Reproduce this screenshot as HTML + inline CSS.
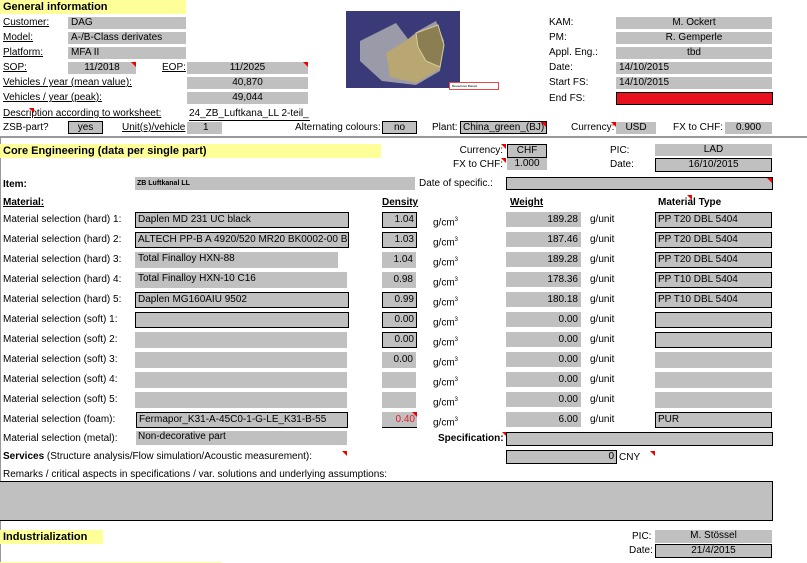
<!DOCTYPE html>
<html><head><meta charset="utf-8"><style>
body{margin:0;width:807px;height:563px;background:#fff;position:relative;overflow:hidden;font-family:"Liberation Sans",Arial,sans-serif;font-size:10px;color:#000}
div{position:absolute;box-sizing:border-box;white-space:nowrap}
.g{background:#c0c0c0;line-height:12px;padding:0 3px}
.b{border:1px solid #000}
.c{text-align:center}.r{text-align:right}
.y{background:#ffff99;font-weight:bold;font-size:11px;line-height:14px;padding-left:3px}
.u{text-decoration:underline}
.t{line-height:12px}
.tri{width:0;height:0;border-top:5px solid #e00;border-left:5px solid transparent}
sup{font-size:6px}
</style></head><body>
<!-- General -->
<div class="y" style="left:0;top:0;width:186px;height:14px">General information</div>
<div class="t u" style="left:3px;top:17px">Customer:</div><div class="g" style="left:68px;top:17px;width:118px;height:12px">DAG</div>
<div class="t u" style="left:3px;top:32px">Model:</div><div class="g" style="left:68px;top:32px;width:118px;height:12px">A-/B-Class derivates</div>
<div class="t u" style="left:3px;top:47px">Platform:</div><div class="g" style="left:68px;top:47px;width:118px;height:12px">MFA II</div>
<div class="t u" style="left:3px;top:62px">SOP:</div><div class="g c" style="left:68px;top:62px;width:68px;height:12px">11/2018</div><div class="tri" style="left:131px;top:62px"></div>
<div class="t u" style="left:162px;top:62px">EOP:</div><div class="g c" style="left:187px;top:62px;width:121px;height:12px">11/2025</div><div class="tri" style="left:303px;top:62px"></div>
<div class="t u" style="left:3px;top:77px">Vehicles / year (mean value):</div><div class="g c" style="left:187px;top:77px;width:121px;height:12px">40,870</div>
<div class="t u" style="left:3px;top:92px">Vehicles / year (peak):</div><div class="g c" style="left:187px;top:92px;width:121px;height:12px">49,044</div>
<div class="t u" style="left:3px;top:108px">Description according to worksheet:</div><div class="tri" style="left:29px;top:108px"></div>
<div class="t" style="left:189px;top:108px;width:121px;overflow:hidden;border-bottom:1px solid #000">24_ZB_Luftkana_LL 2-teil_</div>
<div class="t" style="left:3px;top:122px">ZSB-part?</div><div class="g b c" style="left:68px;top:121px;width:35px;height:13px">yes</div>
<div class="t u" style="left:122px;top:122px">Unit(s)/vehicle</div><div class="g" style="left:187px;top:122px;width:35px;height:12px;padding-left:16px">1</div>
<div class="t" style="left:295px;top:122px">Alternating colours:</div><div class="g b c" style="left:382px;top:121px;width:35px;height:13px">no</div>
<div class="t" style="left:432px;top:122px">Plant:</div><div class="g b" style="left:460px;top:121px;width:87px;height:13px;padding-left:2px">China_green_(BJ)</div><div class="tri" style="left:541px;top:122px"></div>
<div class="t" style="left:571px;top:122px">Currency:</div><div class="tri" style="left:611px;top:122px"></div><div class="g c" style="left:616px;top:122px;width:40px;height:12px">USD</div>
<div class="t" style="left:673px;top:122px">FX to CHF:</div><div class="g c" style="left:725px;top:122px;width:47px;height:12px">0.900</div>
<!-- image -->
<div style="left:346px;top:11px;width:114px;height:77px;background:#3b3a78;overflow:hidden">
<svg width="114" height="77"><polygon points="14,30 50,12 62,28 72,20 90,10 98,30 94,60 70,74 36,70 14,50" fill="#9a9aa8"/><polygon points="40,42 72,22 92,14 98,34 94,58 70,72 44,66" fill="#b8a772"/><polygon points="70,22 92,14 98,34 94,56 80,50 72,36" fill="#8a7e52" stroke="#d8cc99"/></svg></div>
<div style="left:449px;top:82px;width:50px;height:8px;border:1px solid #e44;background:#fff;font-size:3px;line-height:6px;padding-left:2px">Bewerfetes Bauteil</div>
<div class="t" style="left:549px;top:17px">KAM:</div><div class="g c" style="left:616px;top:17px;width:156px;height:12px">M. Ockert</div>
<div class="t" style="left:549px;top:32px">PM:</div><div class="g c" style="left:616px;top:32px;width:156px;height:12px">R. Gemperle</div>
<div class="t" style="left:549px;top:47px">Appl. Eng.:</div><div class="g c" style="left:616px;top:47px;width:156px;height:12px">tbd</div>
<div class="t" style="left:549px;top:62px">Date:</div><div class="g" style="left:616px;top:62px;width:156px;height:12px">14/10/2015</div>
<div class="t" style="left:549px;top:77px">Start FS:</div><div class="g" style="left:616px;top:77px;width:156px;height:12px">14/10/2015</div>
<div class="t" style="left:549px;top:93px">End FS:</div><div class="b" style="left:616px;top:92px;width:157px;height:13px;background:#e8101c"></div>
<div style="left:0;top:136px;width:807px;height:2px;background:#999"></div>
<div style="left:0;top:138px;width:1px;height:425px;background:#999"></div>
<!-- Core -->
<div class="y" style="left:0;top:144px;width:381px;height:14px">Core Engineering (data per single part)</div>
<div class="t r" style="left:430px;top:145px;width:73px">Currency:</div><div class="tri" style="left:501px;top:144px"></div><div class="g b c" style="left:507px;top:144px;width:40px;height:14px">CHF</div>
<div class="t r" style="left:430px;top:159px;width:73px">FX to CHF:</div><div class="tri" style="left:501px;top:158px"></div><div class="g c" style="left:507px;top:158px;width:40px;height:12px">1.000</div>
<div class="t" style="left:610px;top:145px">PIC:</div><div class="g c" style="left:655px;top:144px;width:117px;height:12px">LAD</div>
<div class="t" style="left:610px;top:159px">Date:</div><div class="g b c" style="left:655px;top:158px;width:117px;height:14px">16/10/2015</div>
<div class="t" style="left:3px;top:179px;font-weight:bold">Item:</div>
<div class="g" style="left:135px;top:177px;width:280px;height:13px;font-size:7px;font-weight:bold;line-height:13px;padding-left:2px">ZB Luftkanal LL</div>
<div class="t" style="left:419px;top:178px">Date of specific.:</div><div class="g b" style="left:506px;top:177px;width:267px;height:13px"></div><div class="tri" style="left:767px;top:178px"></div>
<div class="t u" style="left:3px;top:197px;font-weight:bold">Material:</div>
<div class="t u" style="left:382px;top:197px;font-weight:bold">Density</div>
<div class="t u" style="left:510px;top:197px;font-weight:bold">Weight</div>
<div class="t" style="left:658px;top:197px;font-weight:bold">Material Type</div><div class="tri" style="left:687px;top:195px"></div>

<div class="t" style="left:3px;top:214px">Material selection (hard) 1:</div><div class="g b" style="left:135px;top:212px;width:214px;height:16px;line-height:14px;padding-left:2px">Daplen MD 231 UC black</div><div class="g b r" style="left:382px;top:212px;width:35px;height:16px;line-height:14px;padding-right:2px">1.04</div><div class="t" style="left:433px;top:214px">g/cm<sup>3</sup></div><div class="g r" style="left:506px;top:212px;width:75px;height:15px;line-height:15px">189.28</div><div class="t" style="left:590px;top:214px">g/unit</div><div class="g b" style="left:655px;top:212px;width:117px;height:16px;line-height:14px;padding-left:2px">PP T20 DBL 5404</div>

<div class="t" style="left:3px;top:234px">Material selection (hard) 2:</div><div class="g b" style="left:135px;top:232px;width:214px;height:16px;line-height:14px;padding-left:2px;overflow:hidden">ALTECH PP-B A 4920/520 MR20 BK0002-00 BK</div><div class="g b r" style="left:382px;top:232px;width:35px;height:16px;line-height:14px;padding-right:2px">1.03</div><div class="t" style="left:433px;top:234px">g/cm<sup>3</sup></div><div class="g r" style="left:506px;top:232px;width:75px;height:15px;line-height:15px">187.46</div><div class="t" style="left:590px;top:234px">g/unit</div><div class="g b" style="left:655px;top:232px;width:117px;height:16px;line-height:14px;padding-left:2px">PP T20 DBL 5404</div>

<div class="t" style="left:3px;top:254px">Material selection (hard) 3:</div><div class="g" style="left:135px;top:252px;width:203px;height:16px;line-height:14px;padding-left:3px">Total Finalloy HXN-88</div><div class="g r" style="left:382px;top:252px;width:34px;height:16px;line-height:16px;padding-right:3px">1.04</div><div class="t" style="left:433px;top:254px">g/cm<sup>3</sup></div><div class="g r" style="left:506px;top:252px;width:75px;height:15px;line-height:15px">189.28</div><div class="t" style="left:590px;top:254px">g/unit</div><div class="g b" style="left:655px;top:252px;width:117px;height:16px;line-height:14px;padding-left:2px">PP T20 DBL 5404</div>

<div class="t" style="left:3px;top:274px">Material selection (hard) 4:</div><div class="g" style="left:135px;top:272px;width:212px;height:16px;line-height:14px;padding-left:3px">Total Finalloy HXN-10 C16</div><div class="g r" style="left:382px;top:272px;width:34px;height:16px;line-height:16px;padding-right:3px">0.98</div><div class="t" style="left:433px;top:274px">g/cm<sup>3</sup></div><div class="g r" style="left:506px;top:272px;width:75px;height:15px;line-height:15px">178.36</div><div class="t" style="left:590px;top:274px">g/unit</div><div class="g b" style="left:655px;top:272px;width:117px;height:16px;line-height:14px;padding-left:2px">PP T10 DBL 5404</div>

<div class="t" style="left:3px;top:294px">Material selection (hard) 5:</div><div class="g b" style="left:135px;top:292px;width:214px;height:16px;line-height:14px;padding-left:2px">Daplen MG160AIU 9502</div><div class="g b r" style="left:382px;top:292px;width:35px;height:16px;line-height:14px;padding-right:2px">0.99</div><div class="t" style="left:433px;top:294px">g/cm<sup>3</sup></div><div class="g r" style="left:506px;top:292px;width:75px;height:15px;line-height:15px">180.18</div><div class="t" style="left:590px;top:294px">g/unit</div><div class="g b" style="left:655px;top:292px;width:117px;height:16px;line-height:14px;padding-left:2px">PP T10 DBL 5404</div>

<div class="t" style="left:3px;top:314px">Material selection (soft) 1:</div><div class="g b" style="left:135px;top:312px;width:214px;height:16px"></div><div class="g b r" style="left:382px;top:312px;width:35px;height:16px;line-height:14px;padding-right:2px">0.00</div><div class="t" style="left:433px;top:314px">g/cm<sup>3</sup></div><div class="g r" style="left:506px;top:312px;width:75px;height:15px;line-height:15px">0.00</div><div class="t" style="left:590px;top:314px">g/unit</div><div class="g b" style="left:655px;top:312px;width:117px;height:16px"></div>

<div class="t" style="left:3px;top:334px">Material selection (soft) 2:</div><div class="g" style="left:135px;top:332px;width:212px;height:16px"></div><div class="g b r" style="left:382px;top:332px;width:35px;height:16px;line-height:14px;padding-right:2px">0.00</div><div class="t" style="left:433px;top:334px">g/cm<sup>3</sup></div><div class="g r" style="left:506px;top:332px;width:75px;height:15px;line-height:15px">0.00</div><div class="t" style="left:590px;top:334px">g/unit</div><div class="g b" style="left:655px;top:332px;width:117px;height:16px"></div>

<div class="t" style="left:3px;top:354px">Material selection (soft) 3:</div><div class="g" style="left:135px;top:352px;width:212px;height:16px"></div><div class="g r" style="left:382px;top:352px;width:34px;height:16px;line-height:16px;padding-right:3px">0.00</div><div class="t" style="left:433px;top:354px">g/cm<sup>3</sup></div><div class="g r" style="left:506px;top:352px;width:75px;height:15px;line-height:15px">0.00</div><div class="t" style="left:590px;top:354px">g/unit</div><div class="g" style="left:655px;top:352px;width:117px;height:16px"></div>

<div class="t" style="left:3px;top:374px">Material selection (soft) 4:</div><div class="g" style="left:135px;top:372px;width:212px;height:16px"></div><div class="g" style="left:382px;top:372px;width:34px;height:16px"></div><div class="t" style="left:433px;top:374px">g/cm<sup>3</sup></div><div class="g r" style="left:506px;top:372px;width:75px;height:15px;line-height:15px">0.00</div><div class="t" style="left:590px;top:374px">g/unit</div><div class="g" style="left:655px;top:372px;width:117px;height:16px"></div>

<div class="t" style="left:3px;top:394px">Material selection (soft) 5:</div><div class="g" style="left:135px;top:392px;width:212px;height:16px"></div><div class="g" style="left:382px;top:392px;width:34px;height:16px"></div><div class="t" style="left:433px;top:394px">g/cm<sup>3</sup></div><div class="g r" style="left:506px;top:392px;width:75px;height:15px;line-height:15px">0.00</div><div class="t" style="left:590px;top:394px">g/unit</div><div class="g" style="left:655px;top:392px;width:117px;height:16px"></div>

<div class="t" style="left:3px;top:414px">Material selection (foam):</div><div class="g b" style="left:136px;top:412px;width:212px;height:16px;line-height:14px;padding-left:2px">Fermapor_K31-A-45C0-1-G-LE_K31-B-55</div><div class="g r" style="left:382px;top:412px;width:35px;height:16px;line-height:16px;padding-right:2px;color:#e0202c;border-bottom:1px solid #000">0.40</div><div class="tri" style="left:412px;top:412px"></div><div class="t" style="left:433px;top:414px">g/cm<sup>3</sup></div><div class="g r" style="left:506px;top:412px;width:75px;height:15px;line-height:15px">6.00</div><div class="t" style="left:590px;top:414px">g/unit</div><div class="g b" style="left:655px;top:412px;width:117px;height:16px;line-height:14px;padding-left:2px">PUR</div>

<div class="t" style="left:3px;top:433px">Material selection (metal):</div><div class="g" style="left:136px;top:431px;width:211px;height:14px;padding-left:2px">Non-decorative part</div>
<div class="t" style="left:438px;top:433px;font-weight:bold">Specification:</div><div class="tri" style="left:502px;top:432px"></div><div class="g b" style="left:506px;top:432px;width:267px;height:14px"></div>
<div class="t" style="left:3px;top:451px"><b>Services</b> (Structure analysis/Flow simulation/Acoustic measurement):</div><div class="tri" style="left:342px;top:451px"></div>
<div class="g b r" style="left:506px;top:450px;width:111px;height:14px;padding-right:2px">0</div><div class="t" style="left:619px;top:452px">CNY</div><div class="tri" style="left:650px;top:451px"></div>
<div class="t" style="left:3px;top:469px">Remarks / critical aspects in specifications / var. solutions and underlying assumptions:</div>
<div class="b" style="left:-1px;top:481px;width:774px;height:40px;background:#c0c0c0"></div>
<!-- Industrialization -->
<div class="y" style="left:0;top:530px;width:103px;height:14px">Industrialization</div>
<div class="t" style="left:632px;top:531px">PIC:</div><div class="g c" style="left:655px;top:530px;width:117px;height:13px">M. Stössel</div>
<div class="t" style="left:629px;top:545px">Date:</div><div class="g b c" style="left:655px;top:544px;width:117px;height:14px">21/4/2015</div>
<div style="left:0;top:562px;width:221px;height:1px;background:#ffff99"></div>
</body></html>
